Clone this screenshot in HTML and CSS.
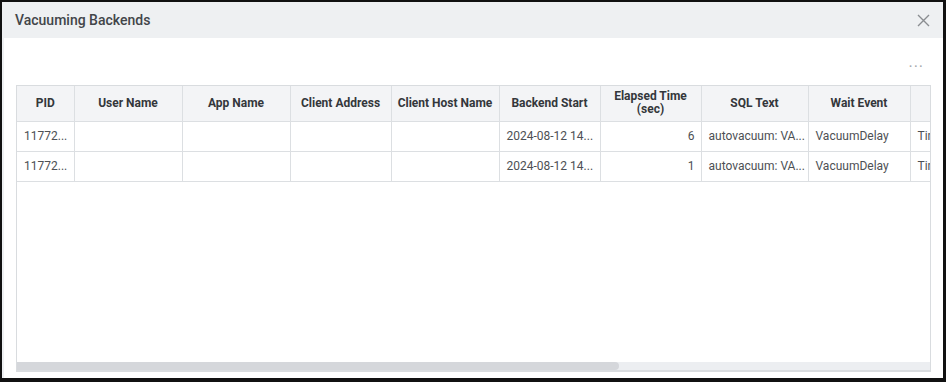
FILE: index.html
```html
<!DOCTYPE html>
<html lang="en">
<head>
    <meta charset="UTF-8">
    <meta name="viewport" content="width=device-width, initial-scale=1.0">
    <title>Vacuuming Backends</title>
    <link rel="stylesheet" href="styles.css">
</head>
<body>
    <div class="frame">
        <div class="backdrop"></div>
        <div class="dialog">
            <div class="dialog-header">
                <span class="dialog-title">Vacuuming Backends</span>
                <button class="close-btn" aria-label="Close">
                    <svg width="13" height="13" viewBox="0 0 13 13">
                        <path d="M1 1 L12 12 M12 1 L1 12" stroke="#8a8d91" stroke-width="1.4" fill="none"/>
                    </svg>
                </button>
            </div>
            <div class="dialog-body">
                <div class="toolbar">
                    <span class="more">&middot;&middot;&middot;</span>
                </div>
                <div class="grid">
                    <div class="grid-scroll">
                        <table>
                            <colgroup>
                                <col style="width: 57px">
                                <col style="width: 108px">
                                <col style="width: 108px">
                                <col style="width: 101px">
                                <col style="width: 108px">
                                <col style="width: 101px">
                                <col style="width: 101px">
                                <col style="width: 107px">
                                <col style="width: 102px">
                                <col style="width: 200px">
                            </colgroup>
                            <thead>
                                <tr>
                                    <th>PID</th>
                                    <th>User Name</th>
                                    <th>App Name</th>
                                    <th>Client Address</th>
                                    <th>Client Host Name</th>
                                    <th>Backend Start</th>
                                    <th>Elapsed Time<br>(sec)</th>
                                    <th>SQL Text</th>
                                    <th>Wait Event</th>
                                    <th class="hidden-head">Wait Event Type</th>
                                </tr>
                            </thead>
                            <tbody>
                                <tr>
                                    <td>11772...</td>
                                    <td></td>
                                    <td></td>
                                    <td></td>
                                    <td></td>
                                    <td>2024-08-12 14...</td>
                                    <td class="num">6</td>
                                    <td>autovacuum: VA...</td>
                                    <td>VacuumDelay</td>
                                    <td>Timeout</td>
                                </tr>
                                <tr>
                                    <td>11772...</td>
                                    <td></td>
                                    <td></td>
                                    <td></td>
                                    <td></td>
                                    <td>2024-08-12 14...</td>
                                    <td class="num">1</td>
                                    <td>autovacuum: VA...</td>
                                    <td>VacuumDelay</td>
                                    <td>Timeout</td>
                                </tr>
                            </tbody>
                        </table>
                    </div>
                    <div class="scrollbar">
                        <div class="scroll-thumb"></div>
                    </div>
                </div>
            </div>
        </div>
    </div>
</body>
</html>
```

FILE: styles.css
```css
* {
    box-sizing: border-box;
}
body {
    margin: 0;
    background-color: #fff;
    font-family: Roboto, "Noto Sans", Arial, sans-serif;
}
.frame {
    width: 946px;
    height: 382px;
    display: flex;
    border-top: 2px solid #111;
    border-left: 2px solid #111;
    border-right: 3px solid #111;
    border-bottom: 4px solid #111;
    background-color: #fff;
    overflow: hidden;
}
.backdrop {
    width: 2px;
    flex-shrink: 0;
    background-color: #eef0f2;
}
.dialog {
    flex: 1;
    min-width: 0;
    display: flex;
    flex-direction: column;
    background-color: #fff;
}
.dialog-header {
    height: 36px;
    display: flex;
    align-items: center;
    justify-content: space-between;
    padding: 0 13px 0 11px;
    background-color: #eef0f2;
}
.dialog-title {
    font-size: 14px;
    font-weight: 500;
    color: #424549;
}
.close-btn {
    border: none;
    background: none;
    padding: 0;
    width: 13px;
    height: 13px;
    display: flex;
    cursor: pointer;
}
.dialog-body {
    flex: 1;
    min-width: 0;
    display: flex;
    flex-direction: column;
    padding: 0 12px 6px 12px;
}
.toolbar {
    height: 47px;
    display: flex;
    justify-content: flex-end;
    align-items: flex-end;
    padding: 0 7px 10px 0;
}
.more {
    color: #a5a9ad;
    font-size: 16px;
    line-height: 16px;
    letter-spacing: 1px;
}
.grid {
    flex: 1;
    min-width: 0;
    display: flex;
    flex-direction: column;
    border: 1px solid #d9dcdf;
    border-bottom-width: 2px;
    overflow: hidden;
}
.grid-scroll {
    flex: 1;
    overflow: hidden;
}
table {
    table-layout: fixed;
    border-collapse: collapse;
    width: 1093px;
}
th, td {
    border-right: 1px solid #dcdfe2;
    border-bottom: 1px solid #dcdfe2;
    font-size: 12px;
    white-space: nowrap;
    overflow: hidden;
}
th {
    height: 35px;
    background-color: #f3f4f6;
    color: #34373b;
    font-weight: 700;
    text-align: center;
    line-height: 13px;
    padding: 0 4px;
}
.hidden-head {
    text-align: right;
}
td {
    height: 30px;
    color: #4d5054;
    padding: 0 7px;
    text-align: left;
}
td.num {
    text-align: right;
    padding-right: 6px;
}
.scrollbar {
    height: 8px;
    background-color: #eceef1;
}
.scroll-thumb {
    width: 602px;
    height: 100%;
    background-color: #d5d7db;
    border-radius: 0 4px 4px 0;
}
```
